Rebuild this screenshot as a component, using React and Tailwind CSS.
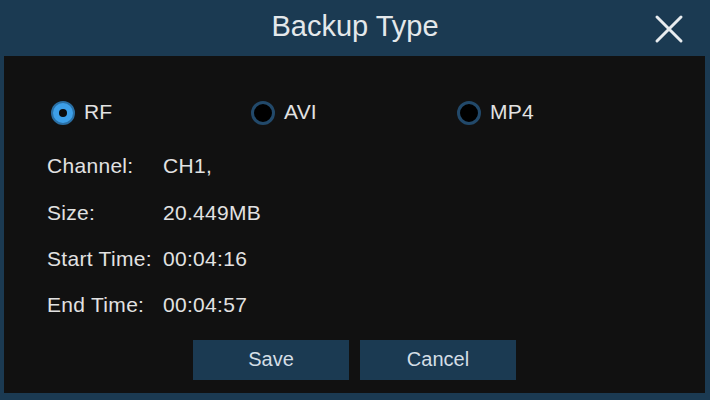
import { useState } from "react";

const FONT = { fontFamily: '"Liberation Sans", Arial, sans-serif' };

function Radio({ label, checked, onSelect, width }) {
  return (
    <button
      onClick={onSelect}
      className={`flex items-center gap-[9px] h-full ${width}`}
    >
      {checked ? (
        <span className="flex items-center justify-center w-[24px] h-[24px] rounded-full bg-[#3d9fe8] border-2 border-[#2a6fa4]">
          <span className="w-[8px] h-[8px] rounded-full bg-[#0b0b0b]" />
        </span>
      ) : (
        <span className="w-[24px] h-[24px] rounded-full bg-black border-[3px] border-[#22496a]" />
      )}
      <span className="text-[21px] tracking-[0.2px] text-[#e2e2e2] -mt-[3px]">{label}</span>
    </button>
  );
}

function InfoRow({ label, value }) {
  return (
    <div className="flex items-center h-[46.33px] text-[21px] tracking-[0.3px] text-[#e2e2e2]">
      <span className="w-[116px]">{label}</span>
      <span>{value}</span>
    </div>
  );
}

export default function App() {
  const [type, setType] = useState("RF");

  return (
    <div style={FONT} className="w-[710px] h-[400px] bg-[#1b3a52] flex flex-col">
      <div className="relative h-[56px] flex items-center justify-center">
        <h2 className="text-[29px] text-[#e4e8eb] leading-none -mt-[3px]">Backup Type</h2>
        <button className="absolute right-[26px] top-[14px] w-[30px] h-[30px]">
          <svg viewBox="0 0 30 30" className="w-full h-full">
            <path d="M3 3 L27 27 M27 3 L3 27" stroke="#e8ecef" strokeWidth="3" strokeLinecap="round" />
          </svg>
        </button>
      </div>

      <div className="ml-[4px] mr-[5px] mb-[7px] flex-1 bg-[#111111] flex flex-col pt-[37px]">
        <div className="flex h-[40px] pl-[47px]">
          <Radio label="RF" width="w-[200px]" checked={type === "RF"} onSelect={() => setType("RF")} />
          <Radio label="AVI" width="w-[206px]" checked={type === "AVI"} onSelect={() => setType("AVI")} />
          <Radio label="MP4" width="w-[120px]" checked={type === "MP4"} onSelect={() => setType("MP4")} />
        </div>

        <div className="mt-[10px] pl-[43px]">
          <InfoRow label="Channel:" value="CH1," />
          <InfoRow label="Size:" value="20.449MB" />
          <InfoRow label="Start Time:" value="00:04:16" />
          <InfoRow label="End Time:" value="00:04:57" />
        </div>

        <div className="mt-[12px] flex justify-center gap-[11px]">
          <button className="w-[156px] h-[40px] bg-[#1b3a52] text-[20px] text-[#d4dee6] pb-[3px]">Save</button>
          <button className="w-[156px] h-[40px] bg-[#1b3a52] text-[20px] text-[#d4dee6] pb-[3px]">Cancel</button>
        </div>
      </div>
    </div>
  );
}
